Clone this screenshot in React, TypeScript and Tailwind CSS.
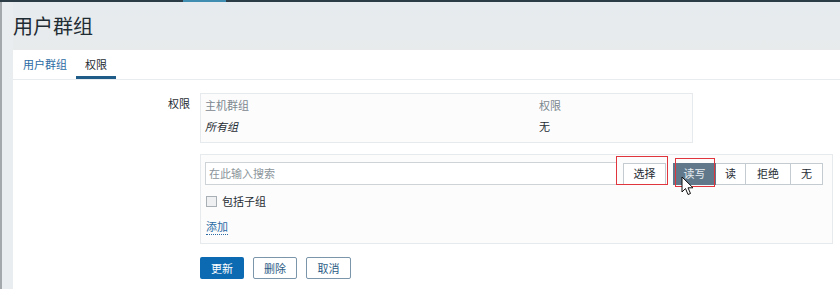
const font = { fontFamily: '"Noto Sans CJK SC", "Noto Sans", sans-serif' };

function Cursor() {
  return (
    <svg className="pointer-events-none absolute left-[681px] top-[176px]" width="13" height="20" viewBox="0 0 13 20">
      <path d="M1 1 L1 16 L4.5 12.5 L7 18.5 L9.5 17.5 L7 11.8 L12 11.8 Z" fill="#fff" stroke="#111" strokeWidth="1" strokeLinejoin="round" />
    </svg>
  );
}

export default function App() {
  return (
    <div style={font} className="relative flex h-[289px] w-[840px] flex-col overflow-hidden bg-[#e9edf0] text-[11px] text-[#1f2c33]">
      <div className="flex h-[2px] shrink-0 bg-[#2c3c46]">
        <div className="ml-[183px] w-[43px] bg-[#3f8db0]" />
      </div>
      <div className="flex flex-1">
        <div className="w-[2px] bg-[#a3a8ac]" />
        <div className="flex flex-1 flex-col pl-[11px]">
          <div className="flex h-[48px] shrink-0 items-center bg-gradient-to-b from-[#e6ebef] to-[#e8ebec]">
            <h1 className="text-[20px] leading-none text-[#1f2c33]">用户群组</h1>
          </div>
          <div className="flex flex-1 flex-col bg-white">
            <div className="flex h-[30px] shrink-0 border-b border-[#e9ecee] pl-[1px]">
              <div className="flex items-center px-[9px] text-[#2b6ba4]">用户群组</div>
              <div className="flex items-center border-b-[3px] border-[#1f5c87] px-[9px] pt-[3px]">权限</div>
            </div>

            <div className="mt-[13px] flex">
              <div className="w-[177px] pt-[2px] text-right">权限</div>
              <div className="ml-[10px] h-[50px] w-[493px] border border-[#e6eaec] bg-[#fcfcfd] px-[4px] pt-[2px]">
                <div className="flex h-[19px] items-center text-[#7b878e]">
                  <span className="w-[334px]">主机群组</span>
                  <span>权限</span>
                </div>
                <div className="flex h-[22px] items-center">
                  <span className="w-[334px] italic">所有组</span>
                  <span>无</span>
                </div>
              </div>
            </div>

            <div className="mt-[11px] flex">
              <div className="w-[177px]" />
              <div className="ml-[10px] flex h-[90px] w-[633px] flex-col border border-[#e6eaec] bg-[#fcfcfd] px-[4px] pt-[7px]">
                <div className="flex items-center">
                  <div className="flex h-[23px] w-[412px] items-center border border-[#cdd3d7] bg-white px-[3px] text-[#8b959b]">在此输入搜索</div>
                  <button className="ml-[6px] h-[22px] w-[43px] border border-[#c5ccd1] bg-white text-[#1f2c33]">选择</button>
                  <div className="ml-[7px] flex h-[22px]">
                    <button className="w-[43px] bg-[#60788a] text-[#e8eef2]">读写</button>
                    <button className="w-[30px] border border-l-0 border-[#c5ccd1] bg-white">读</button>
                    <button className="w-[45px] border border-l-0 border-[#c5ccd1] bg-white">拒绝</button>
                    <button className="w-[32px] border border-l-0 border-[#c5ccd1] bg-white">无</button>
                  </div>
                </div>
                <label className="mt-[8px] flex items-center gap-[5px] pl-[1px]">
                  <span className="h-[11px] w-[11px] border border-[#a9b0b5] bg-[#eef0f2]" />
                  <span>包括子组</span>
                </label>
                <div className="mt-[8px] pl-[1px]">
                  <span className="border-b border-dotted border-[#2b6ba4] text-[#2b6ba4]">添加</span>
                </div>
              </div>
            </div>

            <div className="mt-[13px] flex">
              <div className="w-[177px]" />
              <div className="ml-[10px] flex gap-[9px]">
                <button className="h-[22px] w-[44px] rounded-[2px] bg-[#0c6ab2] text-white">更新</button>
                <button className="h-[22px] w-[44px] rounded-[2px] border border-[#7b95aa] bg-white text-[#2b5c85]">删除</button>
                <button className="h-[22px] w-[45px] rounded-[2px] border border-[#7b95aa] bg-white text-[#2b5c85]">取消</button>
              </div>
            </div>
          </div>
        </div>
      </div>

      <div className="pointer-events-none absolute left-[616px] top-[156px] h-[29px] w-[52px] border border-[#e0353c]" />
      <div className="pointer-events-none absolute left-[675px] top-[158px] h-[29px] w-[40px] border border-[#e0353c]" />
      <Cursor />
    </div>
  );
}
